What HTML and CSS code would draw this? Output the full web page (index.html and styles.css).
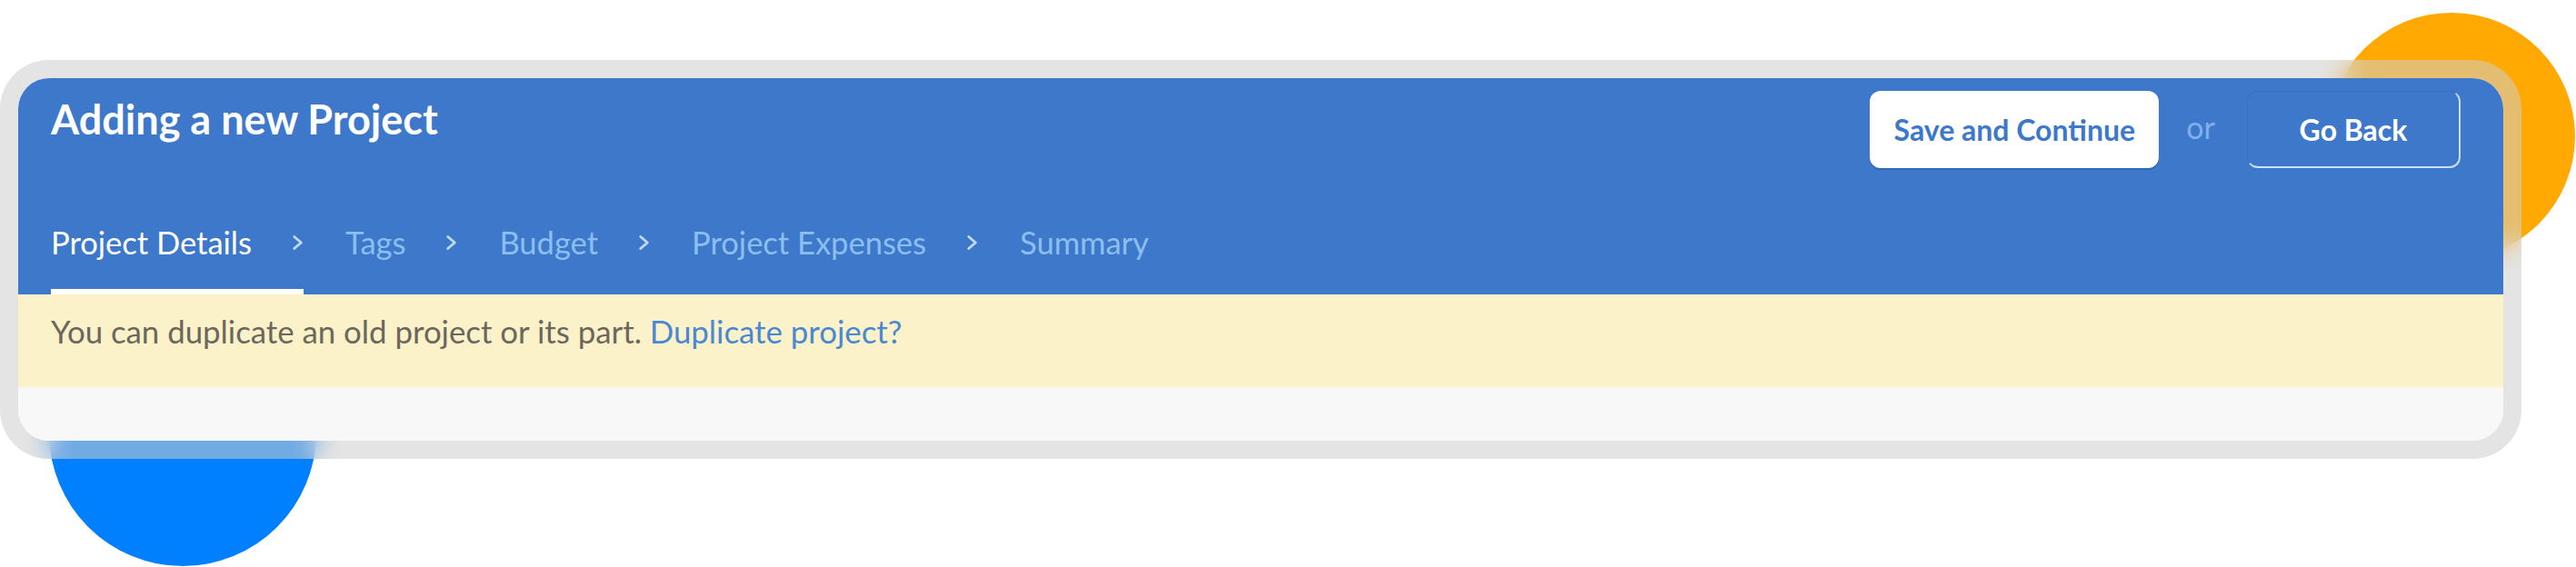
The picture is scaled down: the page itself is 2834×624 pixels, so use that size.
FILE: index.html
```html
<!DOCTYPE html>
<html lang="en">
<head>
  <meta charset="UTF-8">
  <meta name="viewport" content="width=device-width, initial-scale=1.0">
  <title>Adding a new Project</title>
  <link rel="stylesheet" href="styles.css">
</head>
<body>
  <div class="stage">
    <div class="blob blob-orange"></div>
    <div class="blob blob-blue"></div>

    <div class="frame">
      <div class="card">
        <div class="header">
          <div class="header-top">
            <h1>Adding a new Project</h1>
            <div class="actions">
              <button class="save-button">Save and Continue</button>
              <span class="or">or</span>
              <button class="back-button">Go Back</button>
            </div>
          </div>

          <div class="steps">
            <div class="step active">
              <span>Project Details</span>
              <svg class="chevron" viewBox="0 0 12 16"><polyline points="2.5,2 9.5,8 2.5,14"/></svg>
            </div>
            <div class="step">
              <span>Tags</span>
              <svg class="chevron" viewBox="0 0 12 16"><polyline points="2.5,2 9.5,8 2.5,14"/></svg>
            </div>
            <div class="step">
              <span>Budget</span>
              <svg class="chevron" viewBox="0 0 12 16"><polyline points="2.5,2 9.5,8 2.5,14"/></svg>
            </div>
            <div class="step">
              <span>Project Expenses</span>
              <svg class="chevron" viewBox="0 0 12 16"><polyline points="2.5,2 9.5,8 2.5,14"/></svg>
            </div>
            <div class="step">
              <span>Summary</span>
            </div>
          </div>
        </div>

        <div class="notice">
          You can duplicate an old project or its part. <a href="#" class="notice-link">Duplicate project?</a>
        </div>

        <div class="content"></div>
      </div>
    </div>
  </div>
</body>
</html>
```

FILE: styles.css
```css
* {
  margin: 0;
  padding: 0;
  box-sizing: border-box;
}

body {
  width: 2834px;
  height: 624px;
  font-family: Lato, 'Open Sans', sans-serif;
  background: #fff;
  overflow: hidden;
}

.stage {
  position: relative;
  width: 100%;
  height: 100%;
  padding-top: 66px;
}

/* Decorative circles behind the glass frame */
.blob {
  position: absolute;
  border-radius: 50%;
}

.blob-orange {
  left: 2561px;
  top: 14px;
  width: 272px;
  height: 272px;
  background: #ffa902;
}

.blob-blue {
  left: 54px;
  top: 329px;
  width: 294px;
  height: 294px;
  background: #0080ff;
}

.frame {
  position: relative;
  z-index: 1;
  width: 2774px;
  padding: 20px;
  border-radius: 54px;
  background: rgba(205, 205, 205, 0.55);
  backdrop-filter: blur(14px);
}

.card {
  border-radius: 34px;
  overflow: hidden;
  background: #f8f8f8;
}

.header {
  background: #3d78cb;
  padding: 14px 47px 0 36px;
}

.header-top {
  display: flex;
  justify-content: space-between;
  align-items: flex-start;
}

.header h1 {
  margin-top: 4px;
  font-size: 45px;
  line-height: 1.2;
  font-weight: 700;
  color: #fff;
}

.actions {
  display: flex;
  align-items: center;
}

.save-button,
.back-button {
  height: 85px;
  border-radius: 12px;
  font-family: inherit;
  font-size: 32px;
  font-weight: 700;
  cursor: pointer;
}

.save-button {
  width: 318px;
  border: none;
  background: #fff;
  color: #3d78cb;
  box-shadow: 0 2px 0 rgba(20, 50, 110, 0.25);
}

.or {
  margin: 0 35px 6px 30px;
  font-size: 34px;
  color: #7fb0ec;
}

.back-button {
  width: 235px;
  background: #3d78cb;
  color: #fff;
  border: 1px solid #3870c2;
  border-right: 2px solid #cddff6;
  border-bottom: 2px solid #cddff6;
}

.steps {
  display: flex;
  margin-top: 62px;
}

.step {
  display: flex;
  align-items: center;
  gap: 44px;
  margin-right: 46px;
  padding-bottom: 31px;
  border-bottom: 6px solid transparent;
  font-size: 34.5px;
  line-height: 40px;
  color: #8cbff0;
}

.step.active {
  color: #fff;
  border-bottom-color: #fff;
}

.chevron {
  width: 13px;
  height: 18px;
  fill: none;
  stroke: #c3daf5;
  stroke-width: 2.6;
  stroke-linecap: round;
  stroke-linejoin: round;
}

.notice {
  height: 102px;
  padding: 21px 36px 0;
  background: #fbf2c9;
  font-size: 34.8px;
  line-height: 40px;
  color: #6d665c;
}

.notice-link {
  color: #4a88d2;
  text-decoration: none;
}

.content {
  height: 59px;
  background: #f8f8f8;
}
```
